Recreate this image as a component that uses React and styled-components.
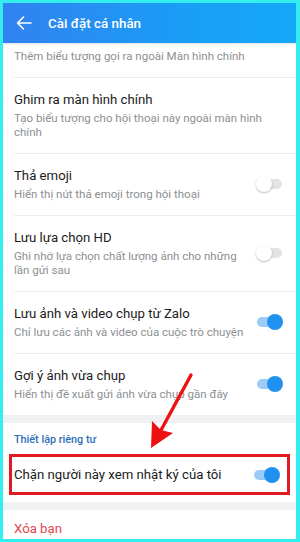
import React from 'react';
import styled, { createGlobalStyle } from 'styled-components';

const GlobalStyle = createGlobalStyle`
  html, body {
    margin: 0;
    padding: 0;
    background: #32eeee;
  }
  body {
    font-family: Roboto, "Noto Sans", "Liberation Sans", sans-serif;
  }
  * { box-sizing: border-box; }
`;

const Frame = styled.div`
  position: relative;
  width: 300px;
  height: 542px;
  border: 3px solid #32eeee;
  border-right-width: 4px;
  background: #ffffff;
  display: flex;
  flex-direction: column;
  overflow: hidden;
`;

const Header = styled.div`
  height: 40px;
  flex-shrink: 0;
  display: flex;
  align-items: center;
  gap: 16px;
  padding-left: 13px;
  background: linear-gradient(90deg, #3182f0 0%, #1a9df6 60%, #15a8f8 100%);
  color: #ffffff;
  position: relative;
  z-index: 1;
  box-shadow: 0 1px 2px rgba(0, 0, 0, 0.12);
`;

const BackButton = styled.button`
  background: none;
  border: none;
  padding: 0;
  width: 16px;
  height: 16px;
  display: flex;
  align-items: center;
  justify-content: center;
  color: #ffffff;
`;

const Title = styled.h1`
  margin: 0;
  font-size: 13.4px;
  font-weight: 500;
`;

const Scroll = styled.div`
  flex: 1;
  overflow: hidden;
  background: #f0f1f3;
`;

const Section = styled.div`
  background: #ffffff;
  margin-top: ${(p) => (p.$gap ? '8px' : '0')};
  padding-bottom: ${(p) => p.$pb || 0}px;
`;

const List = styled(Section)`
  margin-top: -27px;
`;

const Row = styled.div`
  display: flex;
  align-items: center;
  padding: ${(p) => p.$pt || 13}px 13px 14px 11px;
  ${(p) => p.$framed && `
    margin: 0 6px;
    border: 3px solid #e01a22;
    padding: 9px 7px 8px 2px;
  `}
`;

const Divider = styled.div`
  height: 1px;
  background: #ededed;
  margin-left: 11px;
`;

const Texts = styled.div`
  flex: 1;
  min-width: 0;
  padding-right: ${(p) => (p.$wide ? '0' : '8px')};
`;

const RowTitle = styled.div`
  font-size: 13.2px;
  line-height: 18px;
  color: ${(p) => p.$color || '#1b1b1b'};
`;

const RowSub = styled.div`
  margin-top: 2px;
  font-size: 11.5px;
  line-height: 14px;
  color: #8c8f93;
`;

const SectionLabel = styled.div`
  padding: 10px 11px 7px;
  font-size: 10.8px;
  line-height: 14px;
  font-weight: 500;
  color: #2b6fb8;
`;

const Track = styled.div`
  position: relative;
  flex-shrink: 0;
  width: 25px;
  height: 10px;
  border-radius: 5px;
  margin-right: 1px;
  background: ${(p) => (p.$on ? '#9ccbf7' : '#e3e3e3')};
`;

const Knob = styled.span`
  position: absolute;
  top: -3px;
  left: ${(p) => (p.$on ? '10px' : '-1px')};
  width: 16px;
  height: 16px;
  border-radius: 50%;
  background: ${(p) => (p.$on ? '#2191f1' : '#ffffff')};
  box-shadow: ${(p) => (p.$on ? 'none' : '0 1px 2px rgba(0,0,0,0.28)')};
`;

const Arrow = styled.svg`
  position: absolute;
  left: -3px;
  top: -3px;
  width: 300px;
  height: 542px;
  pointer-events: none;
  z-index: 2;
`;

const Toggle = ({ on }) => (
  <Track $on={on}>
    <Knob $on={on} />
  </Track>
);

const settings = [
  { title: 'Thêm vào màn hình chính', sub: 'Thêm biểu tượng gọi ra ngoài Màn hình chính' },
  { title: 'Ghim ra màn hình chính', sub: 'Tạo biểu tượng cho hội thoại này ngoài màn hình chính' },
  { title: 'Thả emoji', sub: 'Hiển thị nút thả emoji trong hội thoại', toggle: false },
  { title: 'Lưu lựa chọn HD', sub: 'Ghi nhớ lựa chọn chất lượng ảnh cho những lần gửi sau', toggle: false },
  { title: 'Lưu ảnh và video chụp từ Zalo', sub: 'Chỉ lưu các ảnh và video của cuộc trò chuyện', toggle: true },
  { title: 'Gợi ý ảnh vừa chụp', sub: 'Hiển thị đề xuất gửi ảnh vừa chụp gần đây', toggle: true },
];

export default function App() {
  return (
    <>
      <GlobalStyle />
      <Frame>
        <Header>
          <BackButton>
            <svg width="16" height="16" viewBox="0 0 16 16" fill="none" stroke="#fff" strokeWidth="1.6" strokeLinecap="round" strokeLinejoin="round">
              <path d="M15 8H1.5M7.5 2L1.5 8l6 6" />
            </svg>
          </BackButton>
          <Title>Cài đặt cá nhân</Title>
        </Header>

        <Scroll>
          <List>
            {settings.map((s, i) => (
              <React.Fragment key={s.title}>
                {i > 0 && <Divider />}
                <Row>
                  <Texts $wide={s.toggle === undefined}>
                    <RowTitle>{s.title}</RowTitle>
                    <RowSub>{s.sub}</RowSub>
                  </Texts>
                  {s.toggle !== undefined && <Toggle on={s.toggle} />}
                </Row>
              </React.Fragment>
            ))}
          </List>

          <Section $gap $pb={7}>
            <SectionLabel>Thiết lập riêng tư</SectionLabel>
            <Row $framed>
              <Texts>
                <RowTitle>Chặn người này xem nhật ký của tôi</RowTitle>
              </Texts>
              <Toggle on />
            </Row>
          </Section>

          <Section $gap>
            <Row $pt={10}>
              <RowTitle $color="#e0464c">Xóa bạn</RowTitle>
            </Row>
          </Section>
        </Scroll>

        <Arrow viewBox="0 0 300 542">
          <line x1="191" y1="375" x2="160" y2="432" stroke="#ee1111" strokeWidth="3.4" strokeLinecap="round" />
          <polygon points="151,448 152,421 161,430 173,433" fill="#ee1111" />
        </Arrow>
      </Frame>
    </>
  );
}
